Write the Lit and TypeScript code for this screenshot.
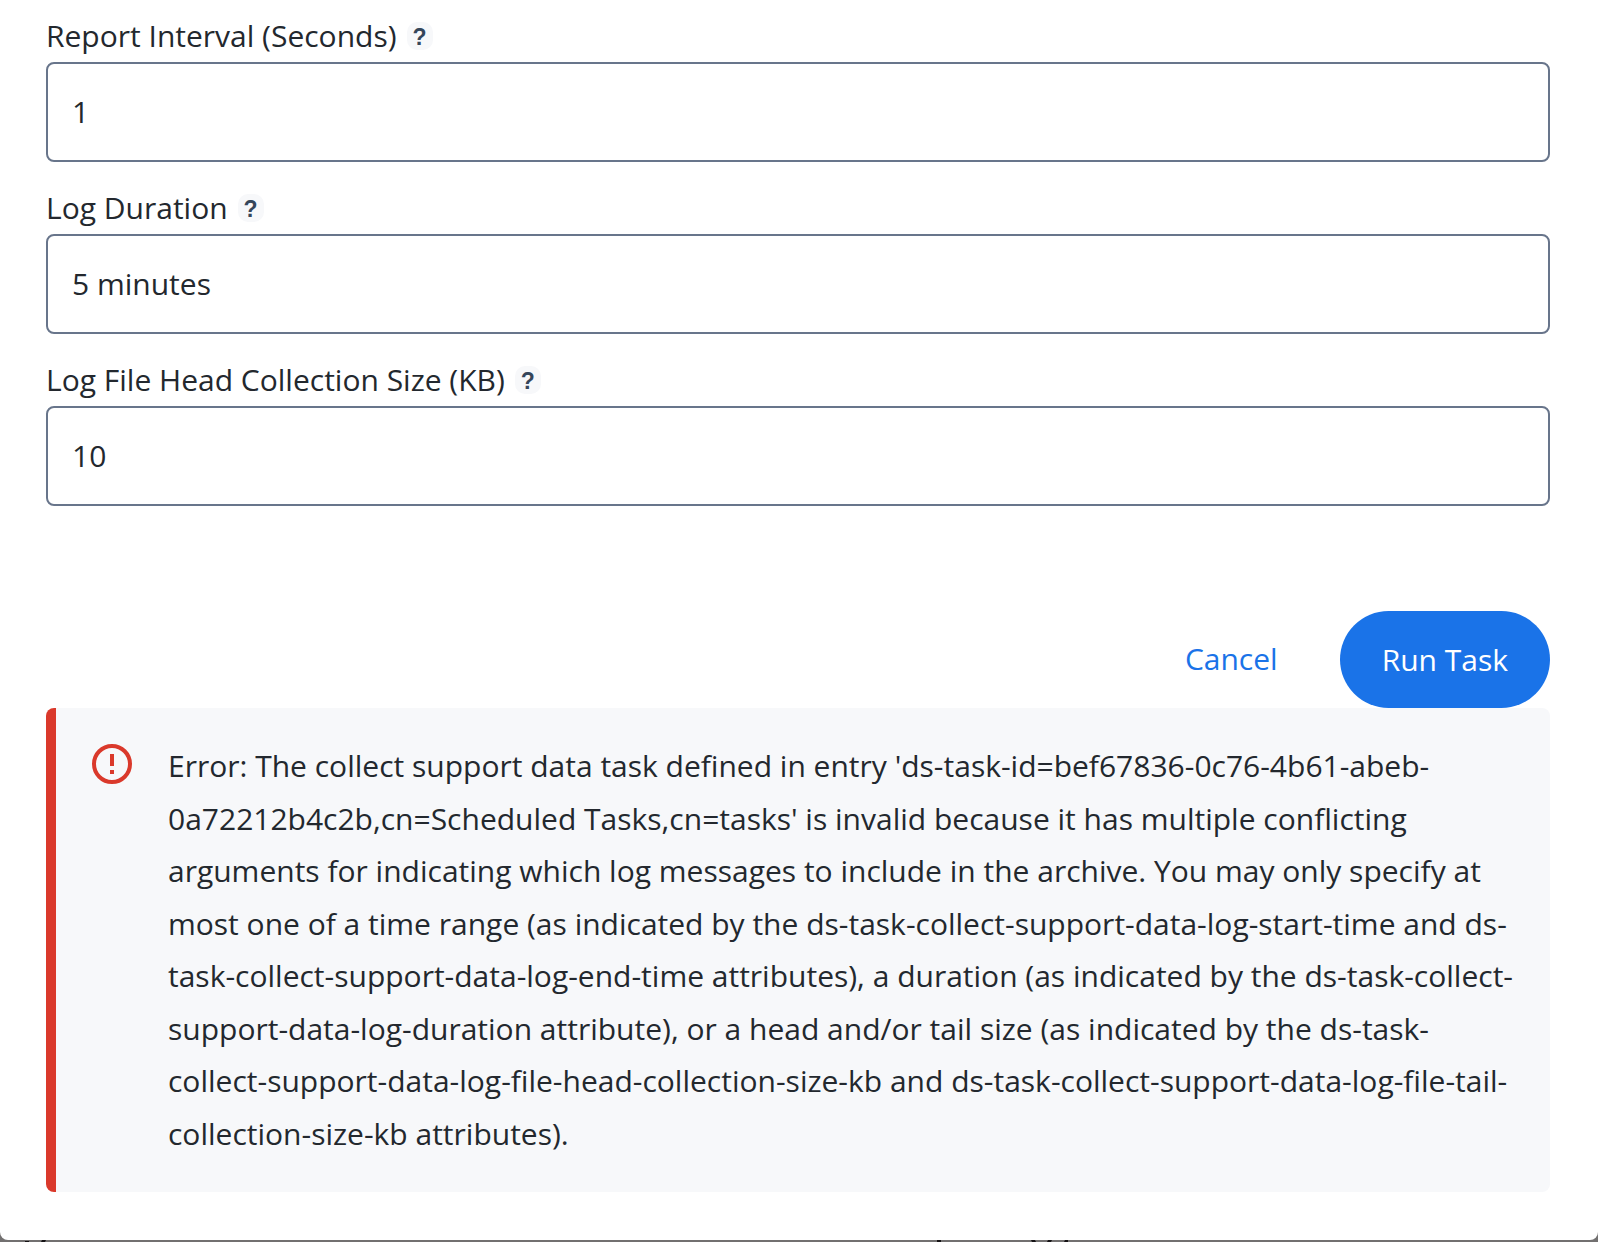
import { LitElement, html, css } from "lit";
import { customElement } from "lit/decorators.js";

interface Field { id: string; label: string; value: string; }

const FIELDS: Field[] = [
  { id: "interval", label: "Report Interval (Seconds)", value: "1" },
  { id: "duration", label: "Log Duration", value: "5 minutes" },
  { id: "head-size", label: "Log File Head Collection Size (KB)", value: "10" },
];

@customElement("app-root")
export class AppRoot extends LitElement {
  static styles = css`
    :host { display: block; min-height: 100vh; background: #727070; font-family: "Open Sans", sans-serif; font-size: 30px; color: #23282e; }
    * { box-sizing: border-box; }
    .dialog { background: #fff; border-radius: 0 0 8px 8px; padding: 16px 48px 48px 46px; }
    .field { margin-bottom: 26px; }
    .head { display: flex; align-items: center; gap: 10px; height: 38px; margin-bottom: 8px; }
    .help { width: 26px; height: 28px; margin-top: 2px; border: 0; padding: 2px 0 0; border-radius: 10px; background: #f7f8fa; color: #35465a; font: 700 23px/26px "Liberation Sans", sans-serif; }
    .input { display: block; width: 100%; height: 100px; border: 2px solid #68758b; border-radius: 8px; padding: 0 24px 2px; font: inherit; color: inherit; background: #fff; }
    .actions { display: flex; justify-content: flex-end; align-items: center; gap: 40px; margin-top: 105px; }
    .cancel, .run { font: inherit; border: 0; }
    .cancel { background: none; color: #1a73e8; padding: 0 22px 2px; }
    .run { background: #1a73e8; color: #fff; height: 97px; padding: 0 42px; border-radius: 49px; }
    .alert { display: flex; gap: 36px; background: #f7f8fa; border-left: 10px solid #da392b; border-radius: 8px; padding: 32px 32px 32px 36px; }
    .icon { flex: none; width: 40px; height: 40px; margin-top: 4px; }
    .msg { margin: 0; line-height: 1.75; }
    .behind { display: block; width: 100%; height: 2px; }
  `;

  render() {
    return html`
      <main class="dialog">
        ${FIELDS.map((f) => html`
          <div class="field">
            <div class="head"><label for=${f.id}>${f.label}</label><button class="help" type="button" aria-describedby=${f.id}>?</button></div>
            <input class="input" id=${f.id} type="text" .value=${f.value} />
          </div>`)}
        <div class="actions">
          <button class="cancel" type="button">Cancel</button>
          <button class="run" type="button">Run Task</button>
        </div>
        <div class="alert" role="alert">
          <svg class="icon" viewBox="0 0 40 40" aria-hidden="true">
            <circle cx="20" cy="20" r="18" fill="none" stroke="#da392b" stroke-width="4" />
            <path d="M18 10h4v12h-4zM18 26h4v4h-4z" fill="#da392b" />
          </svg>
          <p class="msg">Error: The collect support data task defined in entry 'ds-task-id=bef67836-0c76-4b61-abeb-0a72212b4c2b,cn=Scheduled Tasks,cn=tasks' is invalid because it has multiple conflicting arguments for indicating which log messages to include in the archive. You may only specify at most one of a time range (as indicated by the ds-task-collect-support-data-log-start-time and ds-task-collect-support-data-log-end-time attributes), a duration (as indicated by the ds-task-collect-support-data-log-duration attribute), or a head and/or tail size (as indicated by the ds-task-collect-support-data-log-file-head-collection-size-kb and ds-task-collect-support-data-log-file-tail-collection-size-kb attributes).</p>
        </div>
      </main>
      <svg class="behind" aria-hidden="true">
        <path d="M25 1h4v1h-4zM42 0h4l-1 2h-4zM937 0h4v2h-4zM1031 0h4l1 2h-4zM1048 0h4l-1 2h-4zM1065 0h3v2h-4z" fill="#141214" />
      </svg>`;
  }
}
